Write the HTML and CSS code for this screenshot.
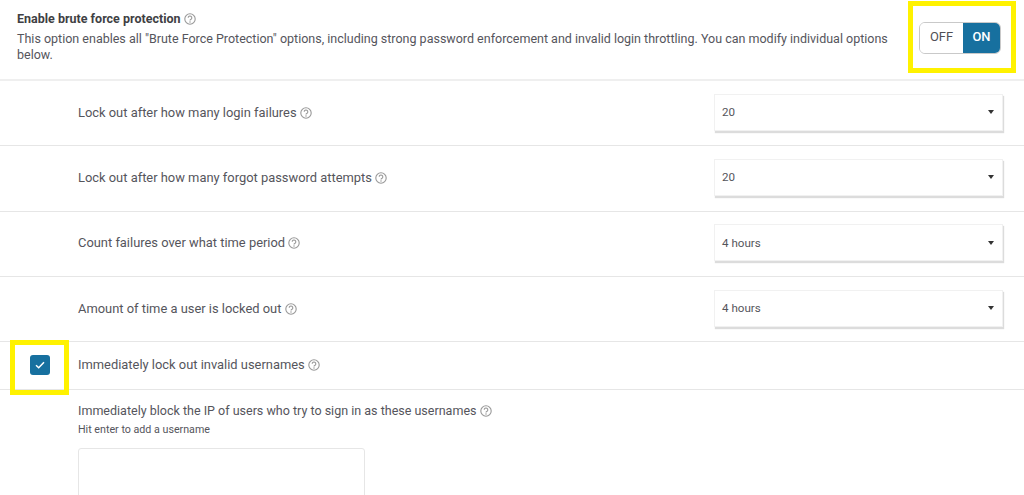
FILE: index.html
```html
<!DOCTYPE html>
<html lang="en">
<head>
<meta charset="utf-8">
<title>Brute force protection</title>
<link rel="stylesheet" href="styles.css">
</head>
<body>
<svg class="defs" width="0" height="0" aria-hidden="true">
  <symbol id="help" viewBox="0 0 12 12">
    <circle cx="6" cy="6" r="5.2" fill="none" stroke="currentColor" stroke-width="1.1"/>
    <path d="M4.2 4.8a1.8 1.8 0 1 1 2.8 1.5c-.7.4-1 .7-1 1.3" fill="none" stroke="currentColor" stroke-width="1.1"/>
    <circle cx="6" cy="9.1" r=".75" fill="currentColor"/>
  </symbol>
</svg>
<main class="page">
  <section class="master">
    <div class="master-text">
      <h1 class="master-title">Enable brute force protection <svg class="help"><use href="#help"/></svg></h1>
      <p class="master-desc">This option enables all "Brute Force Protection" options, including strong password enforcement and invalid login throttling. You can modify individual options below.</p>
    </div>
    <div class="toggle">
      <span class="toggle-off">OFF</span>
      <span class="toggle-on">ON</span>
    </div>
  </section>
  <section class="row">
    <div class="row-label">Lock out after how many login failures <svg class="help"><use href="#help"/></svg></div>
    <div class="select"><span>20</span><i class="caret"></i></div>
  </section>
  <section class="row">
    <div class="row-label">Lock out after how many forgot password attempts <svg class="help"><use href="#help"/></svg></div>
    <div class="select"><span>20</span><i class="caret"></i></div>
  </section>
  <section class="row">
    <div class="row-label">Count failures over what time period <svg class="help"><use href="#help"/></svg></div>
    <div class="select"><span>4 hours</span><i class="caret"></i></div>
  </section>
  <section class="row">
    <div class="row-label">Amount of time a user is locked out <svg class="help"><use href="#help"/></svg></div>
    <div class="select"><span>4 hours</span><i class="caret"></i></div>
  </section>
  <section class="check-row">
    <div class="check-cell">
      <span class="checkbox">
        <svg viewBox="0 0 10 8" width="10" height="8"><path d="M1 4.2 3.7 6.8 9 1.2" fill="none" stroke="#fff" stroke-width="1.5"/></svg>
      </span>
    </div>
    <div class="check-label">Immediately lock out invalid usernames <svg class="help"><use href="#help"/></svg></div>
  </section>
  <section class="block">
    <div class="block-label">Immediately block the IP of users who try to sign in as these usernames <svg class="help"><use href="#help"/></svg></div>
    <div class="block-hint">Hit enter to add a username</div>
    <div class="textarea"></div>
  </section>
</main>
<div class="mark mark-toggle"></div>
<div class="mark mark-check"></div>
</body>
</html>
```

FILE: styles.css
```css
html, body {
  margin: 0;
  padding: 0;
  height: 495px;
  overflow: hidden;
  background: #fff;
}
body {
  position: relative;
  font-family: Roboto, "Liberation Sans", sans-serif;
  font-size: 12.9px;
  color: #55555c;
}
.defs { position: absolute; }
.page { display: flex; flex-direction: column; }
.help {
  width: 12px;
  height: 12px;
  color: #999;
  vertical-align: -2px;
}
.master {
  box-sizing: border-box;
  height: 81px;
  display: flex;
  align-items: flex-start;
  justify-content: space-between;
  padding: 11px 23px 0 17px;
  border-bottom: 2px solid #efefef;
}
.master-text { width: 885px; }
.master-title {
  margin: 0;
  font-size: 12.5px;
  line-height: 16px;
  font-weight: 700;
  color: #3f3f44;
}
.master-desc {
  margin: 4px 0 0;
  font-size: 12.5px;
  line-height: 16px;
}
.toggle {
  display: flex;
  width: 82px;
  height: 32px;
  margin-top: 11px;
  box-sizing: border-box;
  border: 1px solid #c9c9c9;
  border-radius: 6px;
  overflow: hidden;
  line-height: 28px;
  text-align: center;
}
.toggle-off { width: 43px; color: #4f4f55; background: #fff; }
.toggle-on { flex: 1; color: #fff; background: #17709f; font-weight: 500; }
.row {
  box-sizing: border-box;
  height: 65.3px;
  display: flex;
  align-items: center;
  justify-content: space-between;
  padding: 0 21px 2px 78px;
  border-bottom: 1px solid #e6e6e6;
}
.select {
  box-sizing: border-box;
  width: 289px;
  height: 37px;
  display: flex;
  align-items: center;
  justify-content: space-between;
  padding: 0 8px 0 7px;
  font-size: 11.6px;
  background: #fff;
  border: 1px solid #f1f1f1;
  box-shadow: 1px 2px 1px #dcdcdc;
}
.caret {
  width: 0;
  height: 0;
  border-left: 3.5px solid transparent;
  border-right: 3.5px solid transparent;
  border-top: 4px solid #333;
}
.check-row {
  box-sizing: border-box;
  height: 48px;
  display: flex;
  align-items: center;
  padding-bottom: 2px;
  border-bottom: 1px solid #e6e6e6;
}
.check-cell {
  width: 78px;
  display: flex;
  justify-content: center;
}
.checkbox {
  width: 20px;
  height: 20px;
  margin-left: 2px;
  border-radius: 3px;
  background: #17709f;
  display: flex;
  align-items: center;
  justify-content: center;
}
.block { padding: 13px 0 0 78px; }
.block-label { font-size: 12.53px; line-height: 16px; }
.block-hint { font-size: 10.7px; line-height: 13px; margin-top: 4px; }
.textarea {
  box-sizing: border-box;
  width: 287px;
  height: 60px;
  margin-top: 12px;
  border: 1px solid #e6e6e6;
  border-radius: 3px;
}
.mark {
  position: absolute;
  box-sizing: border-box;
  border: 5px solid #fff200;
}
.mark-toggle { left: 908px; top: 1px; width: 108px; height: 72px; }
.mark-check { left: 10px; top: 340px; width: 59px; height: 55px; }
```
